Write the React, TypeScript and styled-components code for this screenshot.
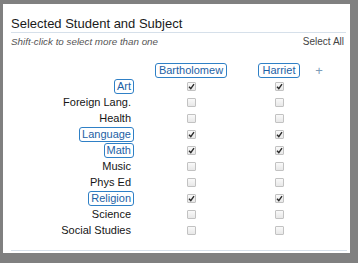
import React from "react";
import styled, { createGlobalStyle } from "styled-components";

const Global = createGlobalStyle`
  html, body { margin: 0; padding: 0; background: #808080; }
  body { font-family: "Liberation Sans", Arial, sans-serif; }
`;

const Page = styled.div`
  width: 358px;
  height: 263px;
  box-sizing: border-box;
  padding: 4px 8px 10px 3px;
`;

const Panel = styled.div`
  background: #ffffff;
  height: 249px;
  box-sizing: border-box;
  padding: 11px 5px 0 8px;
  display: flex;
  flex-direction: column;
`;

const Title = styled.div`
  font-size: 13px;
  line-height: 17px;
  color: #1a1a1a;
  border-bottom: 1px solid #d6e0ea;
  margin-right: -1px;
`;

const SubRow = styled.div`
  display: flex;
  justify-content: space-between;
  margin-top: 3px;
  font-size: 10px;
  line-height: 12px;
  padding-right: 1px;
`;

const Hint = styled.span`
  font-style: italic;
  color: #555;
  font-size: 9.8px;
`;

const SelectAll = styled.span`
  color: #444;
`;

const Grid = styled.div`
  display: grid;
  grid-template-columns: 123px 114px 62px 18px;
  grid-auto-rows: 16px;
  margin-top: 14px;
  align-items: center;
`;

const LabelCell = styled.div`
  display: flex;
  justify-content: flex-end;
`;

const CenterCell = styled.div`
  display: flex;
  justify-content: center;
  align-items: center;
`;

const Tag = styled.span<{ $selected?: boolean }>`
  font-size: 11px;
  line-height: 13px;
  padding: 0 2px;
  border-radius: 3px;
  border: 1px solid ${(p) => (p.$selected ? "#2f80c6" : "transparent")};
  color: ${(p) => (p.$selected ? "#1d5fa5" : "#151515")};
  white-space: nowrap;
`;

const HeaderTag = styled(Tag)`
  padding: 0 3px;
`;

const Plus = styled.span`
  font-size: 13px;
  line-height: 13px;
  color: #7d9cb8;
`;

const Box = styled.span<{ $checked?: boolean }>`
  width: 7px;
  height: 7px;
  border: 1px solid #c2c2c2;
  border-radius: 1px;
  background: linear-gradient(#f9f9f9, #e8e8e8);
  display: inline-flex;
  align-items: center;
  justify-content: center;
`;

const students = [
  { name: "Bartholomew", checked: ["Art", "Language", "Math", "Religion"] },
  { name: "Harriet", checked: ["Art", "Language", "Math", "Religion"] },
];

const subjects = [
  "Art",
  "Foreign Lang.",
  "Health",
  "Language",
  "Math",
  "Music",
  "Phys Ed",
  "Religion",
  "Science",
  "Social Studies",
];

const selectedSubjects = ["Art", "Language", "Math", "Religion"];

const Check = () => (
  <svg width="7" height="7" viewBox="0 0 7 7">
    <path d="M1 3.8 L2.8 5.6 L6 1.2" fill="none" stroke="#2a2a2a" strokeWidth="1.4" />
  </svg>
);

const Footer = styled.div`
  margin-top: 12px;
  margin-right: -2px;
  border-bottom: 1px solid #d6e0ea;
`;

export default function App() {
  return (
    <>
      <Global />
      <Page>
        <Panel>
          <Title>Selected Student and Subject</Title>
          <SubRow>
            <Hint>Shift-click to select more than one</Hint>
            <SelectAll>Select All</SelectAll>
          </SubRow>
          <Grid>
            <div />
            {students.map((s) => (
              <CenterCell key={s.name}>
                <HeaderTag $selected>{s.name}</HeaderTag>
              </CenterCell>
            ))}
            <CenterCell>
              <Plus>+</Plus>
            </CenterCell>
            {subjects.map((sub) => (
              <React.Fragment key={sub}>
                <LabelCell>
                  <Tag $selected={selectedSubjects.includes(sub)}>{sub}</Tag>
                </LabelCell>
                {students.map((s) => (
                  <CenterCell key={s.name}>
                    <Box $checked={s.checked.includes(sub)}>
                      {s.checked.includes(sub) && <Check />}
                    </Box>
                  </CenterCell>
                ))}
                <div />
              </React.Fragment>
            ))}
          </Grid>
          <Footer />
        </Panel>
      </Page>
    </>
  );
}
